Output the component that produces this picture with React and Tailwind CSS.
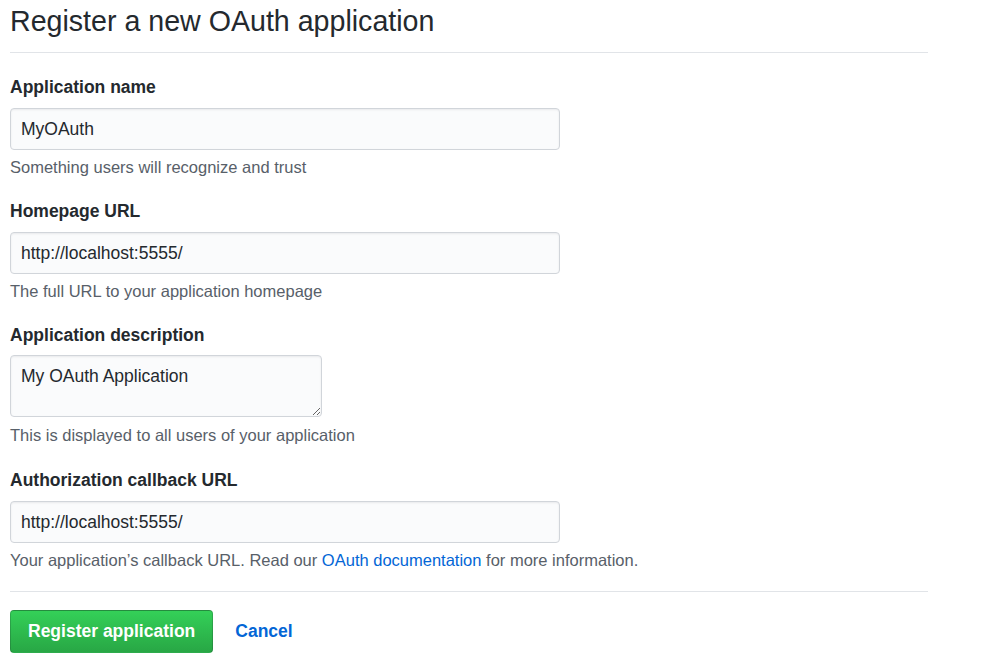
export default function App() {
  const font = { fontFamily: '"Liberation Sans", Arial, Helvetica, sans-serif' };
  const inputCls =
    "block w-[550px] h-[42px] px-[10px] rounded-[4px] border border-[#d1d5da] bg-[#fafbfc] text-[17.5px] text-[#24292e] shadow-[inset_0_1px_2px_rgba(27,31,35,0.075)] outline-none";
  const labelCls = "block text-[17.5px] leading-[22px] font-bold text-[#24292e] mb-[10px]";
  const helpCls = "text-[16.5px] leading-[20px] text-[#586069] mt-[7px]";
  return (
    <div className="bg-white min-h-[662px] w-[1007px] pl-[10px]" style={font}>
      <div className="w-[918px]">
        <div className="pt-[3px] pb-[13px] border-b border-[#e1e4e8]">
          <h1 className="text-[28.6px] leading-[36px] font-normal text-[#24292e]">
            Register a new OAuth application
          </h1>
        </div>
        <div className="pt-[23px]">
          <div>
            <label className={labelCls}>Application name</label>
            <input className={inputCls} defaultValue="MyOAuth" />
            <p className={helpCls}>Something users will recognize and trust</p>
          </div>
          <div className="mt-[23px]">
            <label className={labelCls}>Homepage URL</label>
            <input className={inputCls} defaultValue="http://localhost:5555/" />
            <p className={helpCls}>The full URL to your application homepage</p>
          </div>
          <div className="mt-[23px]">
            <label className={labelCls}>Application description</label>
            <textarea
              className="block w-[312px] h-[62px] -mt-[1px] px-[10px] pt-[9px] rounded-[4px] border border-[#d1d5da] bg-[#fafbfc] text-[17.5px] leading-[22px] text-[#24292e] shadow-[inset_0_1px_2px_rgba(27,31,35,0.075)] outline-none"
              style={font}
              defaultValue="My OAuth Application"
            />
            <p className="text-[16.5px] leading-[20px] text-[#586069] mt-[8px]">
              This is displayed to all users of your application
            </p>
          </div>
          <div className="mt-[24px]">
            <label className={labelCls}>Authorization callback URL</label>
            <input className={inputCls} defaultValue="http://localhost:5555/" />
            <p className={helpCls}>
              Your application’s callback URL. Read our{" "}
              <a className="text-[#0366d6]" href="#">OAuth documentation</a> for more information.
            </p>
          </div>
        </div>
        <div className="mt-[21px] border-t border-[#e1e4e8] pt-[18px] flex items-center">
          <button
            className="h-[43px] px-[17px] rounded-[4px] border border-[rgba(27,31,35,0.2)] bg-gradient-to-b from-[#34d058] to-[#28a745] text-white text-[17.5px] font-bold"
            style={font}
          >
            Register application
          </button>
          <a className="ml-[22px] text-[17.5px] font-bold text-[#0366d6]" href="#">
            Cancel
          </a>
        </div>
      </div>
    </div>
  );
}
